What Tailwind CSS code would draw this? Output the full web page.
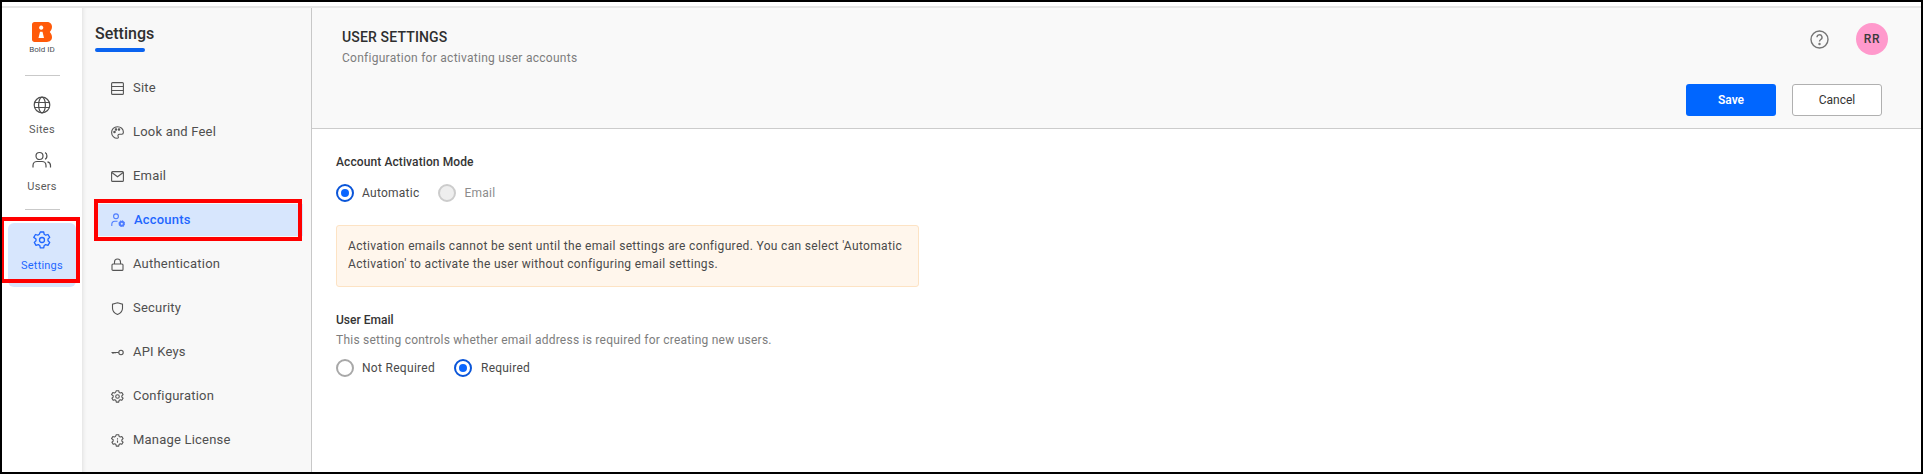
<!DOCTYPE html>
<html lang="en">
<head>
  <meta charset="UTF-8" />
  <title>User Settings</title>
  <script src="https://cdn.jsdelivr.net/npm/@tailwindcss/browser@4"></script>
</head>
<body class="bg-white font-['Roboto',sans-serif] text-[#343434]">
<div class="relative w-[1923px] h-[474px] overflow-hidden border-2 border-black bg-white">
  <!-- top strip -->
  <div class="h-[6px] border-b-2 border-[#e5e5e5]"></div>

  <div class="flex h-[464px]">
    <!-- Icon rail -->
    <aside class="w-[80px] shrink-0 flex flex-col items-center bg-white">
      <svg class="mt-[14px]" width="20" height="20" viewBox="0 0 20 20"><path fill="#ff5a0a" fill-rule="evenodd" d="M2.500 0H15c2.800 0 5 2 5 4.700 0 2-.8 3.800-2.200 5.300C19.200 11.500 20 13.300 20 15.300c0 2.700-2.200 4.700-5 4.700H2.500C1.100 20 0 18.900 0 17.500v-15C0 1.100 1.100 0 2.500 0zM9.200 3.600a2.100 2.100 0 1 0 .01 0zM8 9.800h2.500l1.500 6.200H6.500z"/></svg>
      <span class="mt-[3px] text-[8px] leading-[10px] text-[#4a4f57]">Bold ID</span>
      <div class="mt-[20px] w-[35px] border-t border-[#c9c9c9]"></div>
      <svg class="mt-[20px]" width="18" height="18" viewBox="0 0 18 18" fill="none" stroke="#4f4f4f" stroke-width="1.200"><circle cx="9" cy="9" r="7.800"/><ellipse cx="9" cy="9" rx="3.400" ry="7.800"/><path d="M1.500 6.500h15M1.500 11.500h15"/></svg>
      <span class="mt-[9px] text-[11px] leading-[13px] tracking-[0.3px] text-[#5a5a5a]">Sites</span>
      <svg class="mt-[15px]" width="20" height="18" viewBox="0 0 20 18" fill="none" stroke="#4f4f4f" stroke-width="1.200"><circle cx="7.500" cy="5" r="3.500"/><path d="M1 16.500v-2c0-2.500 2-4 4-4h5c2 0 4 1.500 4 4v2M13 1.700c2.300.5 2.800 5.600 0 6.500M15.500 10.800c2 .5 3 2 3 3.700v2"/></svg>
      <span class="mt-[11px] text-[11px] leading-[13px] tracking-[0.3px] text-[#5a5a5a]">Users</span>
      <div class="mt-[16px] w-[35px] border-t border-[#c9c9c9]"></div>
      <div class="mt-[13px] w-[68px] h-[64px] rounded-md bg-[#d7e6fd] flex flex-col items-center text-[#1f66ff]">
        <svg class="mt-[8px]" width="18" height="18" viewBox="0 0 18 18" fill="none" stroke="currentColor" stroke-width="1.300" stroke-linejoin="round"><path d="M7.300 1h3.400l.5 2.300 1.500.9 2.300-.7 1.700 2.900-1.700 1.600v1.800l1.700 1.600-1.700 2.900-2.300-.7-1.500.9-.5 2.300H7.300l-.5-2.300-1.500-.9-2.300.7-1.700-2.900 1.700-1.600V8L.8 6.400l1.700-2.900 2.300.7 1.500-.9z"/><circle cx="9" cy="9" r="2.500"/></svg>
        <span class="mt-[10px] text-[11px] leading-[13px] tracking-[0.2px]">Settings</span>
      </div>
    </aside>

    <!-- Settings menu -->
    <nav class="w-[230px] shrink-0 bg-[#f8f8f8] border-r border-[#c8c8c8] shadow-[inset_4px_0_4px_-3px_rgba(0,0,0,0.10)] pl-[13px] pr-[9px]">
      <h2 class="mt-[17px] text-[16px] leading-[18px] font-medium text-[#2f2f2f]">Settings</h2>
      <div class="mt-[5px] w-[50px] h-[4px] rounded-full bg-[#0a63f0]"></div>
      <ul class="mt-[14px] -mr-[1px] text-[13px] tracking-[0.2px] text-[#4f4f4f]">
        <li class="h-[44px] flex items-center gap-[9px] pl-[16px]">
          <svg width="13" height="13" viewBox="0 0 13 13" fill="none" stroke="#555" stroke-width="1.100"><rect x=".6" y=".6" width="11.800" height="11.800" rx="1"/><path d="M.6 4.500h11.800M.6 8.500h11.800" /></svg>
          Site
        </li>
        <li class="h-[44px] flex items-center gap-[9px] pl-[16px]">
          <svg width="13" height="13" viewBox="0 0 13 13" fill="none" stroke="#555" stroke-width="1.100"><path d="M6.500.7C3 .7.600 3.300.600 6.500s2.600 5.800 5.500 5.800c1.500 0 1.500-1.200 1-2-.5-1 0-2 1.200-2h2.500c1 0 1.600-.8 1.600-2C12.400 3 9.800.7 6.500.7z"/><circle cx="3.500" cy="6" r=".7" fill="#555"/><circle cx="5" cy="3.500" r=".7" fill="#555"/><circle cx="8" cy="3.500" r=".7" fill="#555"/></svg>
          Look and Feel
        </li>
        <li class="h-[44px] flex items-center gap-[9px] pl-[16px]">
          <svg width="13" height="13" viewBox="0 0 13 13" fill="none" stroke="#555" stroke-width="1.100"><rect x=".6" y="1.600" width="11.800" height="9.800" rx="1"/><path d="M.8 2.500l5.700 4.200 5.700-4.200"/></svg>
          Email
        </li>
        <li class="h-[32px] my-[6px] flex items-center gap-[9px] pl-[16px] bg-[#d7e6fd] text-[#1f66ff] font-medium">
          <svg width="14" height="14" viewBox="0 0 14 14" fill="none" stroke="#4d7cff" stroke-width="1.100"><circle cx="5" cy="3.300" r="2.400"/><path d="M.8 13v-1.500C.8 9.500 2.300 8.300 3.800 8.300h2.700"/><circle cx="10.800" cy="10.700" r="2" stroke-width="1.900" fill="#d7e6fd"/><circle cx="10.800" cy="10.700" r="3" stroke-width="1" stroke-dasharray="1.200 1.150"/></svg>
          Accounts
        </li>
        <li class="h-[44px] flex items-center gap-[9px] pl-[16px]">
          <svg width="13" height="13" viewBox="0 0 13 13" fill="none" stroke="#555" stroke-width="1.100"><rect x="1" y="6" width="11" height="6.400" rx="1"/><path d="M3.500 6V4a3 3 0 0 1 6 0v2"/></svg>
          Authentication
        </li>
        <li class="h-[44px] flex items-center gap-[9px] pl-[16px]">
          <svg width="13" height="13" viewBox="0 0 13 13" fill="none" stroke="#555" stroke-width="1.100"><path d="M6.500.7l5 1.500v4c0 3-2 5-5 6.200-3-1.200-5-3.200-5-6.200v-4z"/></svg>
          Security
        </li>
        <li class="h-[44px] flex items-center gap-[9px] pl-[16px]">
          <svg width="13" height="13" viewBox="0 0 13 13" fill="none" stroke="#555" stroke-width="1.100"><circle cx="10" cy="6.500" r="2.200"/><path d="M7.800 6.500H.5M2 6.500v1.600M4 6.500v1"/></svg>
          API Keys
        </li>
        <li class="h-[44px] flex items-center gap-[9px] pl-[16px]">
          <svg width="13" height="13" viewBox="0 0 18 18" fill="none" stroke="#555" stroke-width="1.500" stroke-linejoin="round"><path d="M7.300 1h3.400l.5 2.300 1.500.9 2.300-.7 1.700 2.900-1.700 1.600v1.800l1.700 1.600-1.700 2.900-2.300-.7-1.500.9-.5 2.300H7.300l-.5-2.300-1.500-.9-2.300.7-1.700-2.900 1.700-1.600V8L.8 6.400l1.700-2.900 2.300.7 1.500-.9z"/><circle cx="9" cy="9" r="2.500"/></svg>
          Configuration
        </li>
        <li class="h-[44px] flex items-center gap-[9px] pl-[16px]">
          <svg width="13" height="13" viewBox="0 0 18 18" fill="none" stroke="#555" stroke-width="1.500" stroke-linejoin="round"><path d="M7.300 1h3.400l.5 2.300 1.500.9 2.300-.7 1.700 2.900-1.700 1.600v1.800l1.700 1.600-1.700 2.900-2.300-.7-1.500.9-.5 2.300H7.300l-.5-2.300-1.500-.9-2.300.7-1.700-2.900 1.700-1.600V8L.8 6.400l1.700-2.900 2.300.7 1.500-.9z"/><path d="M9 6v1.500M9 9v3"/></svg>
          Manage License
        </li>
      </ul>
    </nav>

    <!-- Main -->
    <main class="flex-1 min-w-0">
      <header class="relative h-[121px] bg-[#f9f9f9] border-b border-[#cccccc]">
        <div class="pl-[30px] pt-[20px]">
          <h1 class="text-[14px] leading-[18px] font-medium text-[#2f2f2f] tracking-[0.15px]">USER SETTINGS</h1>
          <p class="mt-[4px] text-[12px] leading-[16px] text-[#7d7d7d] tracking-[0.27px]">Configuration for activating user accounts</p>
        </div>
        <div class="absolute right-[33px] top-[15px] flex items-center gap-[27px]">
          <svg width="19" height="19" viewBox="0 0 19 19" fill="none" stroke="#757575" stroke-width="1.400"><circle cx="9.500" cy="9.500" r="8.500"/><path d="M7 7.300a2.500 2.500 0 1 1 3.700 2.200c-.8.500-1.200 1-1.200 2"/><circle cx="9.500" cy="14" r=".5" fill="#757575"/></svg>
          <div class="w-[32px] h-[32px] rounded-full bg-[#ff99cc] flex items-center justify-center text-[12px] font-medium tracking-[0.6px] text-[#3a3a3a]">RR</div>
        </div>
        <div class="absolute right-[39px] top-[76px] flex gap-[16px]">
          <button class="w-[90px] h-[32px] rounded-[3px] bg-[#0066ff] text-white text-[12px] font-semibold">Save</button>
          <button class="w-[90px] h-[32px] rounded-[3px] bg-white border border-[#b0b0b0] text-[12px] text-[#343434]">Cancel</button>
        </div>
      </header>

      <section class="pl-[24px] pt-[25px]">
        <h3 class="text-[12px] leading-[16px] font-medium tracking-[0.1px] text-[#343434]">Account Activation Mode</h3>
        <div class="mt-[14px] flex items-center h-[18px] text-[12px] tracking-[0.25px]">
          <span class="w-[18px] h-[18px] rounded-full border-2 border-[#0a55d8] flex items-center justify-center"><span class="w-[8px] h-[8px] rounded-full bg-[#0a66ff]"></span></span>
          <span class="ml-[8px] text-[#4a4a4a]">Automatic</span>
          <span class="ml-[19px] w-[18px] h-[18px] rounded-full border-2 border-[#cccccc] bg-[#eeeeee]"></span>
          <span class="ml-[8px] text-[#8c8c8c]">Email</span>
        </div>

        <div class="mt-[23px] w-[583px] h-[62px] rounded-[3px] bg-[#fff6ec] border border-[#fde3c4] px-[11px] pt-[11px] text-[12px] leading-[18px] tracking-[0.33px] text-[#4a4a4a]">
          Activation emails cannot be sent until the email settings are configured. You can select 'Automatic Activation' to activate the user without configuring email settings.
        </div>

        <h3 class="mt-[25px] text-[12px] leading-[16px] font-medium text-[#343434]">User Email</h3>
        <p class="mt-[4px] text-[12px] leading-[16px] tracking-[0.24px] text-[#7d7d7d]">This setting controls whether email address is required for creating new users.</p>
        <div class="mt-[11px] flex items-center h-[18px] text-[12px] tracking-[0.3px] text-[#4a4a4a]">
          <span class="w-[18px] h-[18px] rounded-full border-2 border-[#a8a8a8]"></span>
          <span class="ml-[8px]">Not Required</span>
          <span class="ml-[19px] w-[18px] h-[18px] rounded-full border-2 border-[#0a55d8] flex items-center justify-center"><span class="w-[8px] h-[8px] rounded-full bg-[#0a66ff]"></span></span>
          <span class="ml-[9px] tracking-[0.2px]">Required</span>
        </div>
      </section>
    </main>
  </div>

  <!-- annotation boxes -->
  <div class="absolute left-[-2px] top-[215px] w-[80px] h-[66px] border-4 border-[#ff0000]"></div>
  <div class="absolute left-[92px] top-[197px] w-[208px] h-[42px] border-4 border-[#ff0000]"></div>
</div>
</body>
</html>
